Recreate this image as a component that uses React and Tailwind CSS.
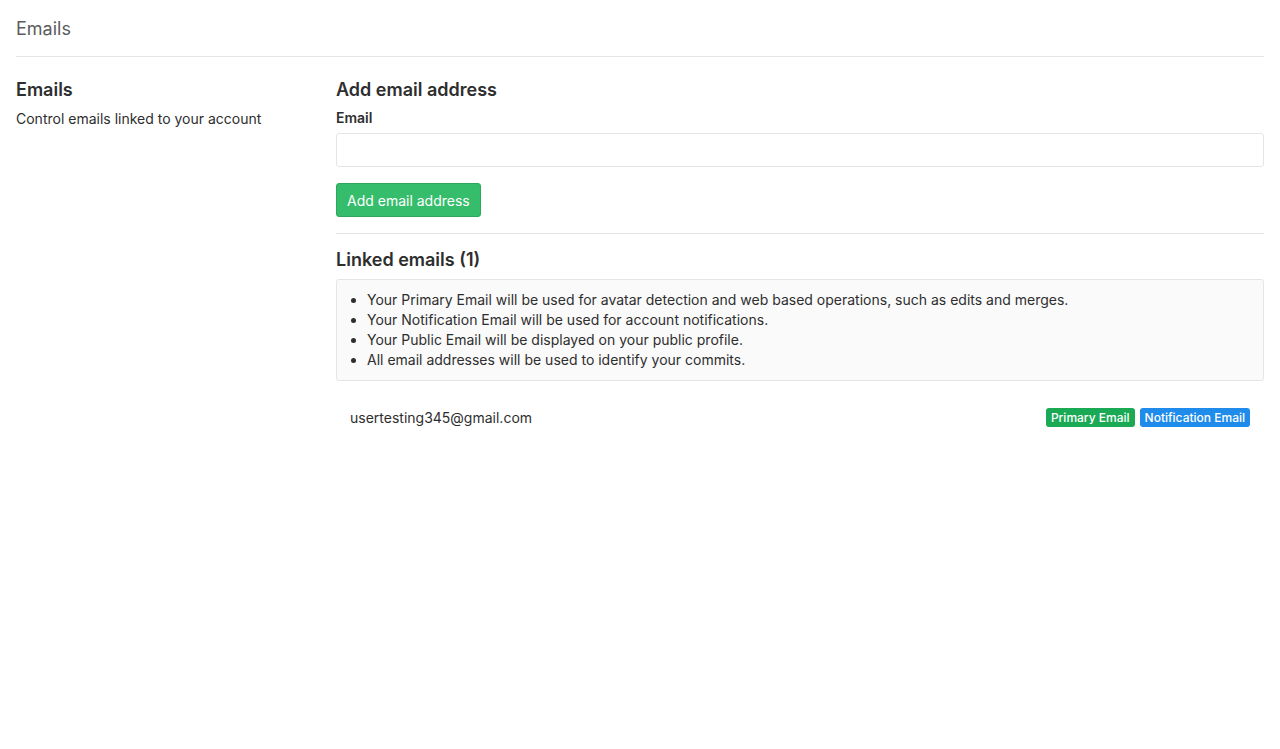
import React from 'react';

const notes = [
  'Your Primary Email will be used for avatar detection and web based operations, such as edits and merges.',
  'Your Notification Email will be used for account notifications.',
  'Your Public Email will be displayed on your public profile.',
  'All email addresses will be used to identify your commits.',
];

const App = () => {
  return (
    <div className="min-h-[749px] bg-white px-4 text-[14px] text-[#2e2e2e]" style={{ fontFamily: 'Inter, "Liberation Sans", Arial, sans-serif' }}>
      {/* Page title */}
      <div className="flex h-[57px] items-center border-b border-[#e5e5e5]">
        <h3 className="text-[18px] text-[#5c5c5c]">Emails</h3>
      </div>

      <div className="flex pt-[19px]">
        {/* Left column */}
        <div className="w-[320px] shrink-0">
          <h4 className="text-[18px] font-semibold leading-[28px] text-[#2e2e2e]">Emails</h4>
          <p className="mt-[5px] leading-[20px]">Control emails linked to your account</p>
        </div>

        {/* Right column */}
        <div className="flex-1">
          <h4 className="text-[18px] font-semibold leading-[28px]">Add email address</h4>
          <form className="mt-[4px]">
            <label className="block font-semibold leading-[20px]">Email</label>
            <input
              type="email"
              className="mt-[5px] block h-[34px] w-full rounded-[3px] border border-[#e5e5e5] px-[10px] outline-none"
            />
            <button
              type="button"
              className="mt-[16px] h-[34px] rounded-[3px] border border-[#2ca85b] bg-[#35bd6b] px-[10px] text-[14px] text-white"
            >
              Add email address
            </button>
          </form>

          <hr className="mt-[16px] border-t border-[#e5e5e5]" />

          <h4 className="mt-[14px] text-[18px] font-semibold leading-[24px]">Linked emails (1)</h4>
          <div className="mt-[7px] rounded-[3px] border border-[#e5e5e5] bg-[#fafafa] px-[16px] py-[10px]">
            <ul className="list-disc pl-[14px] leading-[20px]">
              {notes.map((n) => (
                <li key={n}>{n}</li>
              ))}
            </ul>
          </div>

          <ul className="mt-[16px]">
            <li className="flex items-center justify-between px-[14px] py-[10px]">
              <span>usertesting345@gmail.com</span>
              <span className="flex gap-[5px]">
                <span className="rounded-[3px] bg-[#1aaa55] px-[5px] py-[2px] text-[12px] font-medium leading-[15px] text-white">Primary Email</span>
                <span className="rounded-[3px] bg-[#1f8ceb] px-[5px] py-[2px] text-[12px] font-medium leading-[15px] text-white">Notification Email</span>
              </span>
            </li>
          </ul>
        </div>
      </div>
    </div>
  );
};

export default App;
